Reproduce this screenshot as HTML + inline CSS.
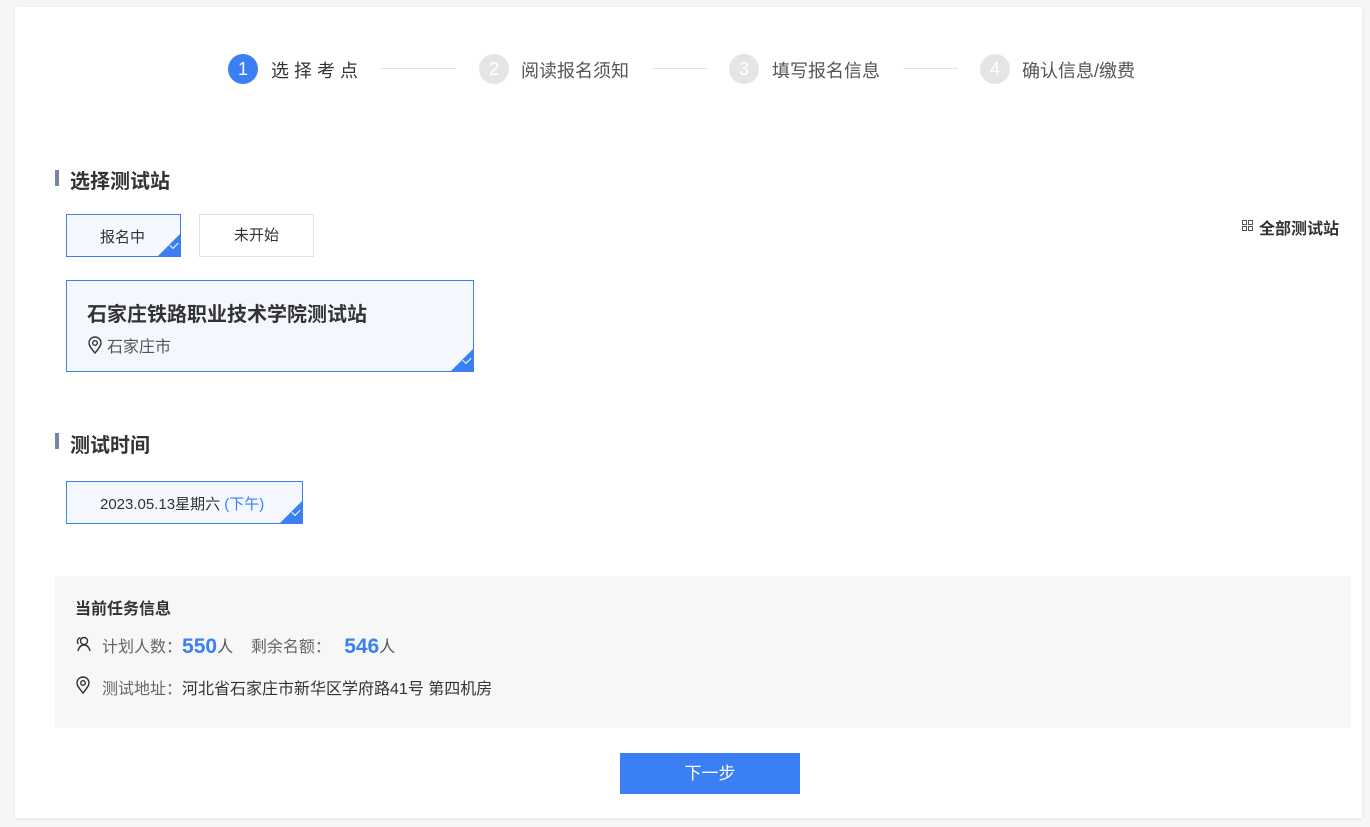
<!DOCTYPE html>
<html><head><meta charset="utf-8"><style>
*{margin:0;padding:0;box-sizing:border-box}
body{width:1370px;height:827px;background:#f6f6f6;font-family:"Liberation Sans","Noto Sans CJK SC",sans-serif;color:#333;position:relative;overflow:hidden}
.card{position:absolute;left:15px;top:7px;width:1347px;height:811px;background:#fff;box-shadow:0 1px 4px rgba(0,0,0,.08)}
.a{position:absolute;white-space:nowrap}
.circ{position:absolute;width:30px;height:30px;border-radius:50%;background:#e5e5e5;color:#fff;font-size:18px;text-align:center;line-height:30px}
.circ.on{background:#3a7ff3}
.line{position:absolute;height:1px;background:#e3e3e3;top:68px}
.step{position:absolute;top:57px;font-size:18px;color:#555}
.bar{position:absolute;width:4px;height:16px;background:#7485a6}
.h{position:absolute;font-size:20px;font-weight:bold;color:#333}
.box{position:absolute;border:1px solid #3a7ff3;background:#f4f7fe;overflow:hidden}
.corner{position:absolute;right:0;bottom:0;width:0;height:0;border-left:22px solid transparent;border-bottom:22px solid #3a7ff3}
.corner:after{content:"";position:absolute;left:-10px;top:8px;width:7px;height:4px;border-left:1.3px solid #fff;border-bottom:1.3px solid #fff;transform:rotate(-45deg)}
</style></head><body>
<div class="card"></div>
<div class="circ on" style="left:228px;top:54px">1</div>
<div class="step" style="left:271px;color:#333;letter-spacing:5px">选择考点</div>
<div class="line" style="left:381px;width:75px"></div>
<div class="circ" style="left:479px;top:54px">2</div>
<div class="step" style="left:521px">阅读报名须知</div>
<div class="line" style="left:652px;width:55px"></div>
<div class="circ" style="left:729px;top:54px">3</div>
<div class="step" style="left:772px">填写报名信息</div>
<div class="line" style="left:903px;width:55px"></div>
<div class="circ" style="left:980px;top:54px">4</div>
<div class="step" style="left:1022px">确认信息/缴费</div>

<div class="bar" style="left:55px;top:170px"></div>
<div class="h" style="left:70px;top:165px">选择测试站</div>
<div class="box" style="left:66px;top:214px;width:115px;height:43px"><div class="a" style="left:33px;top:11px;font-size:15px">报名中</div><div class="corner"></div></div>
<div class="a" style="left:199px;top:214px;width:115px;height:43px;border:1px solid #e3e3e3;font-size:15px;text-align:center;line-height:41px">未开始</div>
<svg class="a" style="left:1242px;top:220px" width="11" height="11" viewBox="0 0 11 11"><g fill="none" stroke="#555" stroke-width="1"><rect x=".5" y=".5" width="4" height="4"/><rect x="6.5" y=".5" width="4" height="4"/><rect x=".5" y="6.5" width="4" height="4"/><rect x="6.5" y="6.5" width="4" height="4"/></g></svg>
<div class="a" style="left:1259px;top:215px;font-size:16px;font-weight:bold">全部测试站</div>
<div class="box" style="left:66px;top:280px;width:408px;height:92px">
<div class="a" style="left:20px;top:17px;font-size:20px;font-weight:bold">石家庄铁路职业技术学院测试站</div>
<svg class="a" style="left:20px;top:55px" width="16" height="18" viewBox="0 0 16 18"><path d="M8 17C3 11 2 9 2 7a6 6 0 0 1 12 0c0 2-1 4-6 10z" fill="none" stroke="#333" stroke-width="1.4"/><circle cx="8" cy="7" r="2.3" fill="none" stroke="#333" stroke-width="1.4"/></svg>
<div class="a" style="left:40px;top:52px;font-size:16px;color:#555">石家庄市</div>
<div class="corner"></div></div>

<div class="bar" style="left:55px;top:433px"></div>
<div class="h" style="left:70px;top:429px">测试时间</div>
<div class="box" style="left:66px;top:481px;width:237px;height:43px"><div class="a" style="left:33px;top:11px;font-size:15px">2023.05.13星期六 <span style="color:#3a7ff3">(下午)</span></div><div class="corner"></div></div>

<div class="a" style="left:55px;top:576px;width:1296px;height:152px;background:#f7f7f7"></div>
<div class="a" style="left:75px;top:595px;font-size:16px;font-weight:bold">当前任务信息</div>
<svg class="a" style="left:75px;top:636px" width="17" height="16" viewBox="0 0 17 16"><circle cx="9" cy="5" r="3.5" fill="none" stroke="#333" stroke-width="1.4"/><path d="M3 15c1-4 3-6 6-6s5 2 6 6M5.5 1.8a3.5 3.5 0 0 0-2 6" fill="none" stroke="#333" stroke-width="1.4"/></svg>
<div class="a" style="left:102px;top:633px;font-size:16px;color:#666">计划人数：<b style="color:#3a7ff3;font-size:21px;position:relative;top:1px">550</b><span style="color:#555">人</span>&nbsp;&nbsp;&nbsp;&nbsp;剩余名额：&nbsp;&nbsp;&nbsp;<b style="color:#3a7ff3;font-size:21px;position:relative;top:1px">546</b><span style="color:#555">人</span></div>
<svg class="a" style="left:75px;top:676px" width="16" height="18" viewBox="0 0 16 18"><path d="M8 17C3 11 2 9 2 7a6 6 0 0 1 12 0c0 2-1 4-6 10z" fill="none" stroke="#333" stroke-width="1.4"/><circle cx="8" cy="7" r="2.3" fill="none" stroke="#333" stroke-width="1.4"/></svg>
<div class="a" style="left:102px;top:675px;font-size:16px;color:#666">测试地址：<span style="color:#333">河北省石家庄市新华区学府路41号 第四机房</span></div>

<div class="a" style="left:620px;top:753px;width:180px;height:41px;background:#3a7ff3;color:#fff;font-size:17px;text-align:center;line-height:41px">下一步</div>
</body></html>
